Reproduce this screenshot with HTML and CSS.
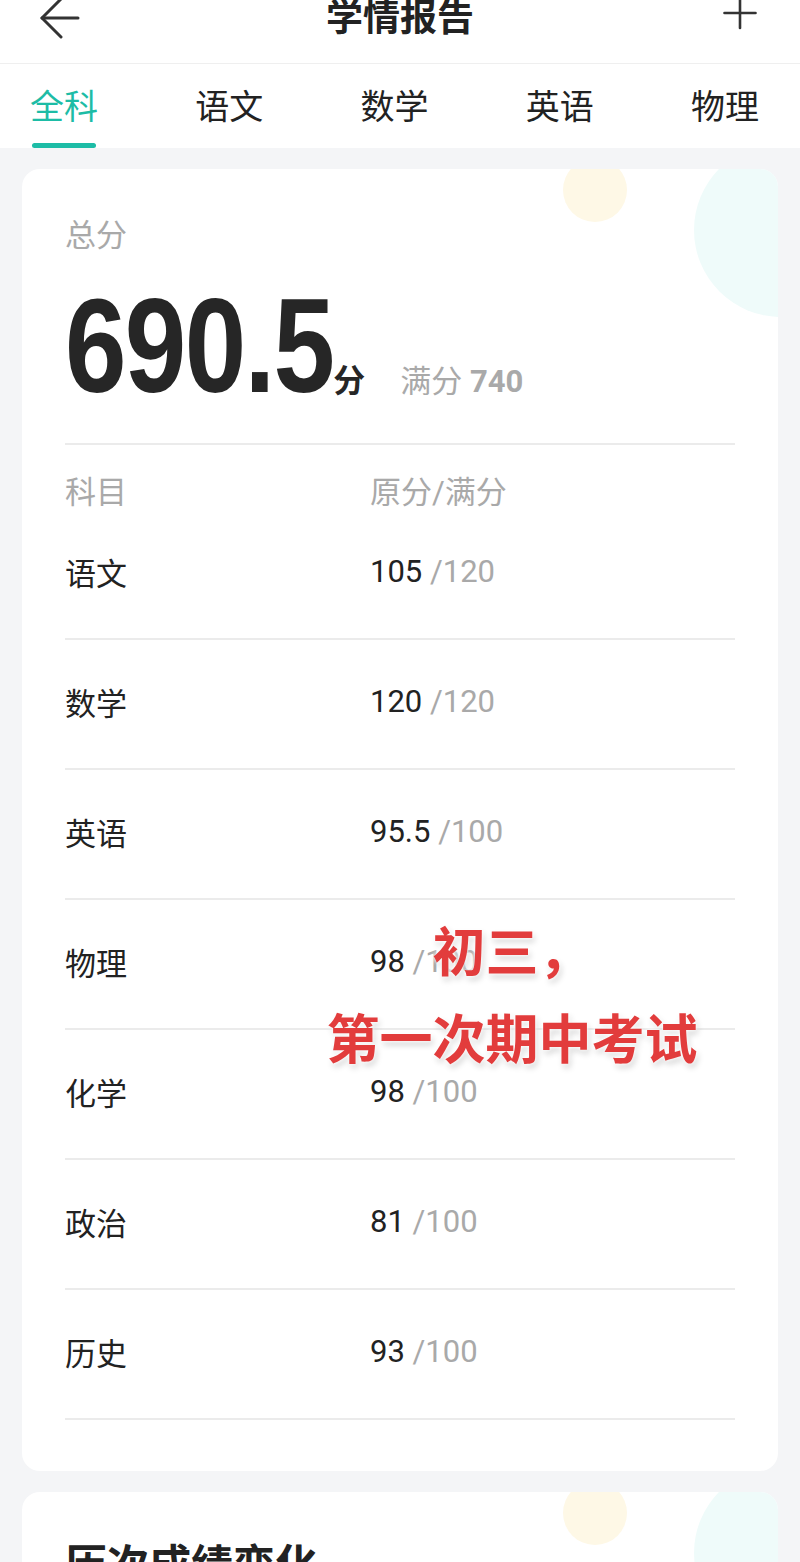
FILE: index.html
```html
<!DOCTYPE html>
<html lang="zh-CN">
<head>
<meta charset="utf-8">
<title>学情报告</title>
<link rel="stylesheet" href="styles.css">
</head>
<body>
<header class="topbar">
  <div class="topbar-left">
    <svg class="icon-back" width="46" height="40" viewBox="0 0 46 40" fill="none" stroke="#333" stroke-width="3" stroke-linecap="round" stroke-linejoin="round">
      <path d="M6 18 H42"/>
      <path d="M25 -1 L6 18 L25 37"/>
    </svg>
  </div>
  <h1 class="title">学情报告</h1>
  <div class="topbar-right">
    <svg class="icon-plus" width="40" height="34" viewBox="0 0 40 34" fill="none" stroke="#333" stroke-width="2.6" stroke-linecap="round">
      <path d="M4.5 13 H35.5"/>
      <path d="M20 -3 V28"/>
    </svg>
  </div>
</header>
<nav class="tabs">
  <div class="tab active"><span class="tab-text">全科</span><span class="tab-bar"></span></div>
  <div class="tab"><span class="tab-text">语文</span><span class="tab-bar"></span></div>
  <div class="tab"><span class="tab-text">数学</span><span class="tab-bar"></span></div>
  <div class="tab"><span class="tab-text">英语</span><span class="tab-bar"></span></div>
  <div class="tab"><span class="tab-text">物理</span><span class="tab-bar"></span></div>
</nav>
<main class="content">
  <section class="card card-score">
    <span class="deco deco-yellow"></span>
    <span class="deco deco-cyan"></span>
    <div class="label">总分</div>
    <div class="score-line">
      <span class="score-big">690.5</span>
      <span class="score-unit">分</span>
      <span class="score-full">满分 <b>740</b></span>
    </div>
    <div class="divider"></div>
    <div class="table">
      <div class="thead">
        <span>科目</span>
        <span>原分/满分</span>
      </div>
      <div class="row"><span class="subject">语文</span><span class="mark">105 <em>/120</em></span></div>
      <div class="row"><span class="subject">数学</span><span class="mark">120 <em>/120</em></span></div>
      <div class="row"><span class="subject">英语</span><span class="mark">95.5 <em>/100</em></span></div>
      <div class="row"><span class="subject">物理</span><span class="mark">98 <em>/100</em></span></div>
      <div class="row"><span class="subject">化学</span><span class="mark">98 <em>/100</em></span></div>
      <div class="row"><span class="subject">政治</span><span class="mark">81 <em>/100</em></span></div>
      <div class="row"><span class="subject">历史</span><span class="mark">93 <em>/100</em></span></div>
    </div>
    <div class="overlay-note">
      <div>初三，</div>
      <div>第一次期中考试</div>
    </div>
  </section>
  <section class="card card-history">
    <span class="deco deco-yellow"></span>
    <span class="deco deco-cyan"></span>
    <h2 class="card-title">历次成绩变化</h2>
  </section>
</main>
</body>
</html>
```

FILE: styles.css
```css
* {
  box-sizing: border-box;
}

html, body {
  margin: 0;
  padding: 0;
}

body {
  background: #f4f5f7;
  font-family: Roboto, "Noto Sans CJK SC", sans-serif;
  color: #222;
  width: 800px;
  overflow: hidden;
}

.topbar {
  height: 64px;
  background: #fff;
  border-bottom: 1px solid #efefef;
  display: grid;
  grid-template-columns: 1fr auto 1fr;
  align-items: start;
}

.topbar-left {
  padding-left: 36px;
}

.topbar-right {
  justify-self: end;
  padding-right: 40px;
}

.icon-back,
.icon-plus {
  display: block;
  overflow: visible;
}

.title {
  margin: 0;
  font-family: "Noto Sans CJK SC", sans-serif;
  font-size: 37px;
  font-weight: 700;
  line-height: 30px;
  color: #222;
}

.tabs {
  height: 84px;
  background: #fff;
  display: flex;
  justify-content: space-between;
  padding: 0 41px 0 30px;
}

.tab {
  display: flex;
  flex-direction: column;
  align-items: center;
  padding-top: 21px;
}

.tab-text {
  font-family: "Noto Sans CJK SC", sans-serif;
  font-size: 34px;
  line-height: 40px;
  color: #222;
}

.tab-bar {
  width: 64px;
  height: 5px;
  margin-top: 18px;
  border-radius: 3px;
  background: transparent;
}

.tab.active .tab-text {
  color: #1dbca6;
}

.tab.active .tab-bar {
  background: #1dbca6;
}

.content {
  padding: 21px 22px 0;
  display: flex;
  flex-direction: column;
  gap: 21px;
}

.card {
  position: relative;
  background: #fff;
  border-radius: 18px;
  overflow: hidden;
  padding: 47px 43px 51px;
}

.deco {
  position: absolute;
  border-radius: 50%;
}

.deco-yellow {
  left: 541px;
  top: -11px;
  width: 64px;
  height: 64px;
  background: #fef8e6;
}

.deco-cyan {
  left: 672px;
  top: -26px;
  width: 174px;
  height: 174px;
  background: #effbfa;
}

.label {
  position: relative;
  font-size: 31px;
  line-height: 40px;
  color: #a9a9a9;
}

.score-line {
  position: relative;
  display: flex;
  align-items: baseline;
  margin-top: 23px;
}

.score-big {
  display: inline-block;
  font-family: "Liberation Sans", Arial, sans-serif;
  font-weight: 700;
  font-size: 134px;
  line-height: 1;
  color: #262626;
  letter-spacing: -2px;
  transform: scaleX(0.825);
  transform-origin: 0 50%;
  margin-right: -57px;
}

.score-unit {
  font-family: "Noto Sans CJK SC", sans-serif;
  font-weight: 700;
  font-size: 32px;
  line-height: 1;
  color: #262626;
  margin-left: 0;
}

.score-full {
  font-size: 31px;
  line-height: 1;
  color: #a9a9a9;
  margin-left: 35px;
}

.score-full b {
  font-weight: 700;
}

.divider {
  position: relative;
  height: 2px;
  background: #ebebeb;
  margin-top: 30px;
}

.table {
  position: relative;
}

.thead {
  display: grid;
  grid-template-columns: 305px 1fr;
  padding-top: 31px;
  font-size: 31px;
  line-height: 34px;
  color: #a9a9a9;
}

.row {
  display: grid;
  grid-template-columns: 305px 1fr;
  align-items: center;
  height: 130px;
  padding-bottom: 6px;
  border-bottom: 2px solid #ebebeb;
  font-size: 31px;
  color: #222;
}

.mark em {
  font-style: normal;
  color: #a9a9a9;
}

.overlay-note {
  position: absolute;
  left: 290px;
  top: 737px;
  width: 400px;
  text-align: center;
  font-family: "Noto Sans CJK SC", sans-serif;
  font-weight: 700;
  font-size: 53px;
  line-height: 87px;
  color: #e23c3c;
  text-shadow: 0 0 3px #fff, 0 0 6px #fff, 2px 4px 6px rgba(0, 0, 0, 0.18);
}

.card-history {
  min-height: 400px;
  padding-top: 45px;
}

.card-title {
  position: relative;
  margin: 0;
  font-family: "Noto Sans CJK SC", sans-serif;
  font-size: 42px;
  line-height: 50px;
  font-weight: 700;
  color: #222;
}
```
